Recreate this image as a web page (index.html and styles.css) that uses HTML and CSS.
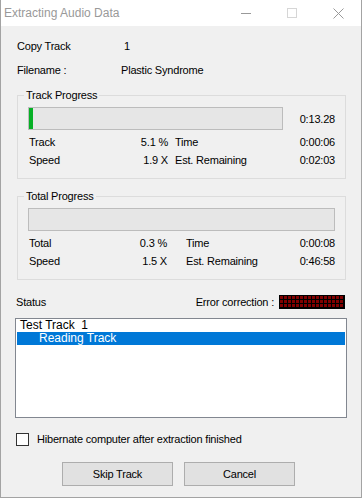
FILE: index.html
```html
<!DOCTYPE html>
<html>
<head>
<meta charset="utf-8">
<link rel="stylesheet" href="styles.css">
</head>
<body>
<div class="window">
  <div class="titlebar">
    <div class="title">Extracting Audio Data</div>
    <div class="tbtn"><svg width="10" height="10" viewBox="0 0 10 10"><path d="M0 5.5H10" stroke="#999" stroke-width="1"/></svg></div>
    <div class="tbtn"><svg width="10" height="10" viewBox="0 0 10 10"><rect x="0.5" y="0.5" width="9" height="9" fill="none" stroke="#d6d6d6" stroke-width="1"/></svg></div>
    <div class="tbtn"><svg width="11" height="11" viewBox="0 0 11 11"><path d="M0.5 0.5L10.5 10.5M10.5 0.5L0.5 10.5" stroke="#999" stroke-width="1"/></svg></div>
  </div>
  <div class="content">
    <div class="info">
      <span class="info-label">Copy Track</span><span class="info-val one">1</span>
    </div>
    <div class="info second">
      <span class="info-label">Filename :</span><span class="info-val">Plastic Syndrome</span>
    </div>

    <fieldset class="group first-group">
      <legend>Track Progress</legend>
      <div class="barrow">
        <div class="bar short"><div class="fill" style="width:4px"></div></div>
        <div class="bartime">0:13.28</div>
      </div>
      <div class="stats">
        <span class="name">Track</span><span class="val">5.1 %</span><span class="key">Time</span><span class="time">0:00:06</span>
        <span class="name">Speed</span><span class="val">1.9 X</span><span class="key">Est. Remaining</span><span class="time">0:02:03</span>
      </div>
    </fieldset>

    <fieldset class="group second-group">
      <legend>Total Progress</legend>
      <div class="barrow">
        <div class="bar full"></div>
      </div>
      <div class="stats wide">
        <span class="name">Total</span><span class="val">0.3 %</span><span class="key">Time</span><span class="time">0:00:08</span>
        <span class="name">Speed</span><span class="val">1.5 X</span><span class="key">Est. Remaining</span><span class="time">0:46:58</span>
      </div>
    </fieldset>

    <div class="statusrow">
      <span>Status</span>
      <span class="spacer"></span>
      <span class="errlabel">Error correction :</span>
      <span class="led"></span>
    </div>

    <div class="listbox">
      <div class="item">Test Track&nbsp; 1</div>
      <div class="item selected indent">Reading Track</div>
    </div>

    <label class="check">
      <span class="box"></span>
      <span>Hibernate computer after extraction finished</span>
    </label>

    <div class="buttons">
      <div class="btn">Skip Track</div>
      <div class="btn">Cancel</div>
    </div>
  </div>
</div>
</body>
</html>
```

FILE: styles.css
```css
html, body {
  margin: 0;
  padding: 0;
  background: #f0f0f0;
}
body {
  font-family: "Liberation Sans", Arial, sans-serif;
  font-size: 11px;
  letter-spacing: -0.2px;
  color: #000;
}
.window {
  width: 362px;
  height: 498px;
  box-sizing: border-box;
  border: 1px solid #a3a3a3;
  border-top: none;
  background: #f0f0f0;
  display: flex;
  flex-direction: column;
  overflow: hidden;
}
.titlebar {
  height: 26px;
  background: #fff;
  display: flex;
  align-items: center;
  flex-shrink: 0;
}
.title {
  flex: 1;
  padding-left: 3px;
  font-size: 12px;
  letter-spacing: 0;
  color: #999;
  line-height: 26px;
}
.tbtn {
  width: 46px;
  height: 26px;
  display: flex;
  align-items: center;
  justify-content: center;
}
.content {
  padding: 0 15px;
  display: flex;
  flex-direction: column;
}
.info {
  display: flex;
  line-height: 14px;
  margin-top: 13px;
  padding-left: 1px;
}
.info.second {
  margin-top: 10px;
}
.info-label {
  width: 104px;
}
.info-val.one {
  padding-left: 3px;
}
.group {
  margin: 11px 0 0 1px;
  width: 329px;
  box-sizing: border-box;
  border: 1px solid #dcdcdc;
  padding: 5px 10px 11px 10px;
  min-width: 0;
}
.second-group {
  margin-top: 10px;
}
.group legend {
  margin-left: -4px;
  padding: 0 2px;
  line-height: 14px;
  height: 14px;
}
.barrow {
  display: flex;
  align-items: center;
  justify-content: space-between;
}
.bar {
  height: 23px;
  box-sizing: border-box;
  border: 1px solid #bcbcbc;
  background: #e6e6e6;
  display: flex;
}
.bar.short {
  width: 255px;
}
.bar.full {
  width: 307px;
}
.fill {
  background: #06b025;
  height: 100%;
}
.bartime {
  text-align: right;
}
.stats {
  display: grid;
  grid-template-columns: 100px 40px auto 1fr;
  row-gap: 4px;
  margin-top: 5px;
  line-height: 14px;
}
.stats .name {
  padding-left: 1px;
}
.stats .val {
  text-align: right;
  white-space: pre;
}
.stats .key {
  padding-left: 7px;
}
.stats.wide .val {
  padding-right: 1px;
}
.stats.wide .key {
  padding-left: 18px;
}
.stats .time {
  text-align: right;
}
.statusrow {
  margin-top: 15px;
  display: flex;
  align-items: center;
  line-height: 14px;
  height: 14px;
}
.spacer {
  flex: 1;
}
.errlabel {
  margin-right: 5px;
}
.led {
  width: 64px;
  height: 12px;
  border: 1px solid #000;
  margin-right: 1px;
  background:
    linear-gradient(90deg, transparent 3px, #000 3px) 0 0 / 4px 4px,
    linear-gradient(180deg, transparent 3px, #000 3px) 0 0 / 4px 4px,
    #800000;
}
.listbox {
  margin: 9px -1px 0 -1px;
  height: 100px;
  box-sizing: border-box;
  border: 1px solid #828790;
  background: #fff;
  padding: 0 1px;
  font-size: 12px;
  letter-spacing: 0;
}
.item {
  line-height: 13px;
  height: 13px;
  padding-left: 3px;
  white-space: pre;
}
.item.indent {
  padding-left: 22px;
}
.item.selected {
  background: #0078d7;
  color: #fff;
}
.check {
  margin-top: 14px;
  display: flex;
  align-items: center;
  line-height: 14px;
}
.box {
  width: 13px;
  height: 13px;
  box-sizing: border-box;
  border: 1px solid #333;
  background: #fff;
  margin-right: 8px;
}
.buttons {
  margin-top: 16px;
  display: flex;
  gap: 11px;
  padding-left: 46px;
}
.btn {
  width: 111px;
  height: 24px;
  box-sizing: border-box;
  border: 1px solid #adadad;
  background: #e1e1e1;
  display: flex;
  align-items: center;
  justify-content: center;
}
```
